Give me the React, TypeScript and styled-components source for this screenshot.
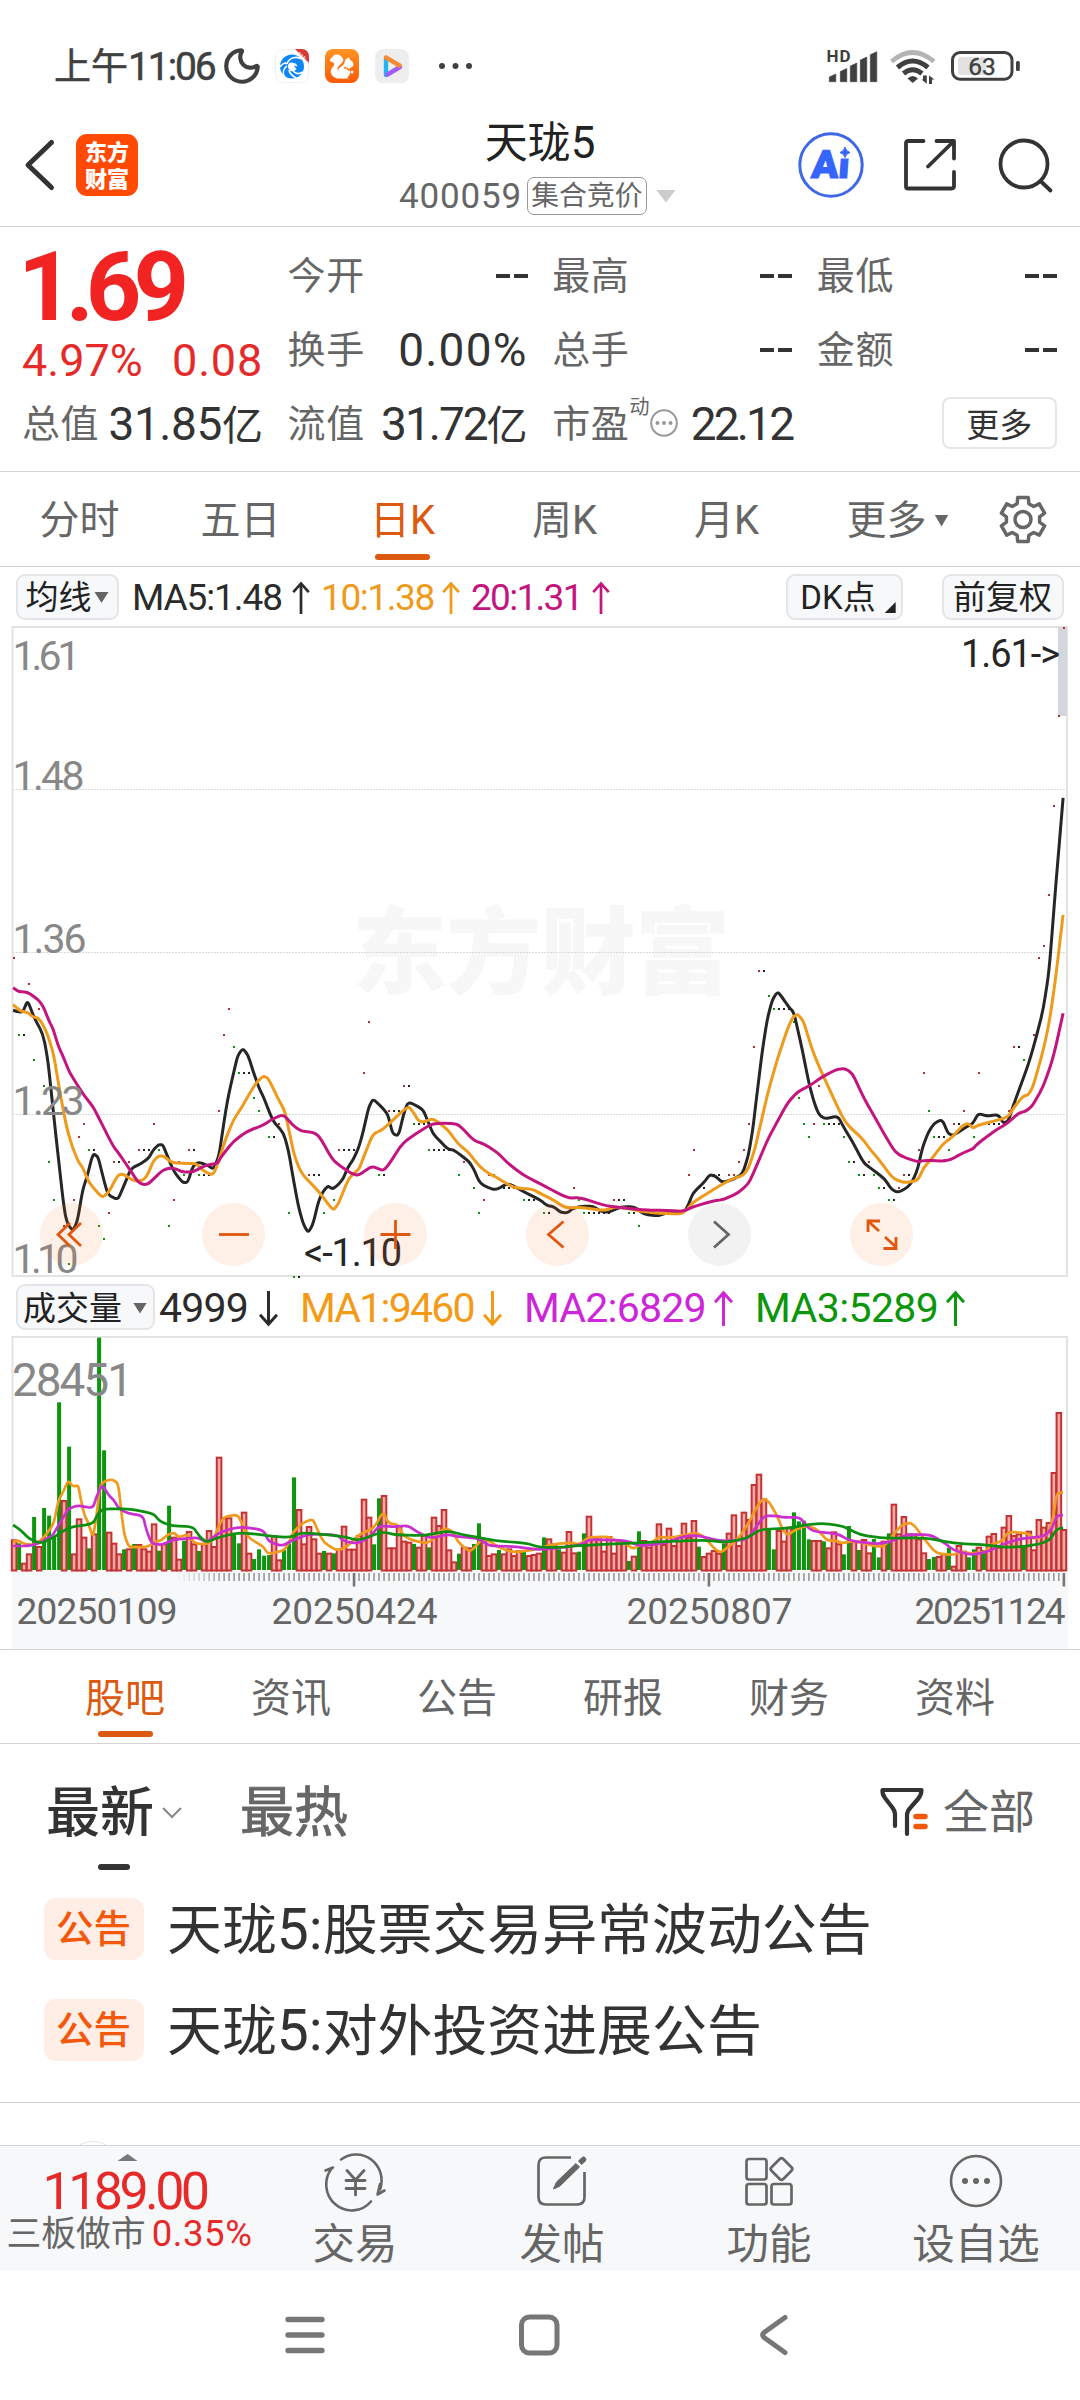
import React from "react";
import styled, { createGlobalStyle } from "styled-components";
import { Moon } from "lucide-react";

const FONT = `Roboto, "Noto Sans CJK SC", sans-serif`;
const ACCENT = "#dc5a10";
const GREY = "#666";
const INK = "#2b2b2b";
const RED = "#e62a2a";

const Global = createGlobalStyle`
  * { box-sizing: border-box; }
  body { margin: 0; background: #fff; font-family: ${FONT}; line-height: 1; color: ${INK}; }
  svg { display: block; flex: none; overflow: visible; }
  text { font-family: ${FONT}; }
`;

const Screen = styled.div`
  width: 1080px;
  height: 2400px;
  overflow: hidden;
  display: flex;
  flex-direction: column;
  background: #fff;
  white-space: nowrap;
`;

const Num = styled.span<{ $size: number; $ls?: number; $color?: string; $weight?: number }>`
  font-size: ${(p) => p.$size}px;
  letter-spacing: ${(p) => p.$ls ?? 0}px;
  color: ${(p) => p.$color ?? "inherit"};
  font-weight: ${(p) => p.$weight ?? 400};
`;

/* ---------- status bar ---------- */
const StatusBar = styled.div`
  height: 104px;
  padding: 28px 60px 0 54px;
  display: flex;
  align-items: center;
  color: #404040;
`;
const Clock = styled.div`
  font-size: 37px;
  display: flex;
  align-items: baseline;
  width: 167px;
  padding-top: 2px;
  -webkit-text-stroke: 0.5px currentColor;
`;
const AppIcons = styled.div`
  display: flex;
  align-items: center;
  gap: 16px;
  margin-left: 12px;
`;
const StatusDots = styled.div`
  margin-left: 29px;
`;
const StatusRight = styled.div`
  display: flex;
  align-items: center;
  margin-left: auto;
`;

/* ---------- header ---------- */
const Header = styled.header`
  height: 123px;
  border-bottom: 1px solid #d5d5d5;
  display: grid;
  grid-template-columns: 270px 1fr 290px;
  align-items: center;
`;
const HeaderLeft = styled.div`
  display: flex;
  align-items: center;
  padding-left: 24px;
  gap: 21px;
`;
const Logo = styled.div`
  width: 62px;
  height: 62px;
  border-radius: 11px;
  background: #ff4a05;
  color: #fff;
  font: 900 22px/27px "Noto Sans CJK SC", sans-serif;
  display: flex;
  flex-direction: column;
  align-items: center;
  justify-content: center;
  padding-bottom: 2px;
`;
const TitleBlock = styled.div`
  display: flex;
  flex-direction: column;
  align-items: center;
  padding-top: 6px;
  gap: 12px;
`;
const Title = styled.div`
  font-size: 43px;
  display: flex;
  align-items: baseline;
  padding-left: 20px;
  color: #222;
`;
const SubTitle = styled.div`
  display: flex;
  align-items: center;
  color: ${GREY};
  padding-left: 15px;
`;
const Badge = styled.span`
  width: 120px;
  height: 38px;
  margin-left: 5px;
  border: 1.5px solid #999;
  border-radius: 7px;
  font-size: 27.8px;
  display: flex;
  align-items: center;
  justify-content: center;
`;
const Caret = styled.i<{ $w: number; $h: number; $c: string; $ml?: number; $up?: boolean }>`
  width: ${(p) => p.$w}px;
  height: ${(p) => p.$h}px;
  margin-left: ${(p) => p.$ml ?? 0}px;
  background: ${(p) => p.$c};
  clip-path: ${(p) => (p.$up ? "polygon(50% 0, 100% 100%, 0 100%)" : "polygon(0 0, 100% 0, 50% 100%)")};
`;
const HeaderRight = styled.div`
  display: flex;
  align-items: center;
  gap: 40px;
  padding-left: 8px;
`;

/* ---------- quote ---------- */
const Quote = styled.section`
  height: 245px;
  padding: 11px 24px 10px 22px;
  border-bottom: 1px solid #d5d5d5;
  display: grid;
  grid-template-columns: 241px repeat(3, 240px);
  grid-template-rows: 74px 74px 74px;
  column-gap: 24.6px;
`;
const Cell = styled.div<{ $drop?: number }>`
  display: flex;
  align-items: center;
  justify-content: space-between;
  padding-top: ${(p) => p.$drop ?? 2}px;
  color: #333;
`;
const Label = styled.span`
  font-size: 38px;
  letter-spacing: 0.6px;
  color: ${GREY};
`;
const Value = styled.span<{ $ls?: number }>`
  font-size: 46px;
  letter-spacing: ${(p) => p.$ls ?? 0}px;
  display: flex;
  align-items: baseline;
`;
const Unit = styled.span`
  font-size: 41px;
  letter-spacing: 0;
`;
const Dash = styled.span`
  display: flex;
  gap: 4px;
  &::before,
  &::after {
    content: "";
    width: 14px;
    height: 3.5px;
    background: #333;
  }
`;
const Price = styled.div`
  display: flex;
  align-items: center;
  padding-top: 24px;
  margin-left: -4px;
  color: #f12323;
`;
const PeLabel = styled.span`
  display: flex;
  align-items: center;
`;
const Sup = styled.sup`
  font-size: 20px;
  align-self: flex-start;
  margin: -8px 1px 0 0;
  color: ${GREY};
`;
const MoreButton = styled.button`
  margin-left: auto;
  width: 115px;
  height: 52px;
  border: 2px solid #e6e6e6;
  border-radius: 8px;
  background: #fff;
  padding: 0 0 3px;
  font: 33px ${FONT};
  color: #333;
`;

/* ---------- tabs ---------- */
const PeriodTabs = styled.nav`
  height: 95px;
  border-bottom: 1px solid #d5d5d5;
  display: flex;
  align-items: center;
  padding-right: 24px;
`;
const PeriodTab = styled.div<{ $active?: boolean; $w: number }>`
  width: ${(p) => p.$w}px;
  height: 94px;
  display: flex;
  align-items: center;
  justify-content: center;
  padding: 3px 1px 0 0;
  font-size: 40px;
  position: relative;
  color: ${(p) => (p.$active ? ACCENT : GREY)};
  &::after {
    content: "";
    display: ${(p) => (p.$active ? "block" : "none")};
    position: absolute;
    bottom: 6px;
    left: 50%;
    margin-left: -28px;
    width: 55px;
    height: 6px;
    border-radius: 3px;
    background: ${ACCENT};
  }
`;
const TabSpacer = styled.div`
  width: 11px;
`;

const LegendBar = styled.div<{ $h: number; $gap: number }>`
  height: ${(p) => p.$h}px;
  padding: 0 16px;
  display: flex;
  align-items: center;
  gap: ${(p) => p.$gap}px;
`;
const Pill = styled.div<{ $w: number; $push?: boolean; $mr?: number }>`
  width: ${(p) => p.$w}px;
  height: 46px;
  margin-left: ${(p) => (p.$push ? "auto" : "0")};
  margin-right: ${(p) => p.$mr ?? 0}px;
  border: 2px solid #e4e5e8;
  border-radius: 9px;
  background: #f7f8fa;
  font-size: 33px;
  color: #222;
  display: flex;
  align-items: center;
  justify-content: center;
  padding: 2px 1px 0 0;
`;
const Corner = styled.i`
  width: 11px;
  height: 11px;
  margin: 20px -8px 0 9px;
  background: #222;
  clip-path: polygon(100% 0, 100% 100%, 0 100%);
`;
const LegendItem = styled.div<{ $w: number; $c: string }>`
  width: ${(p) => p.$w}px;
  color: ${(p) => p.$c};
  display: flex;
  align-items: center;
  justify-content: space-between;
  padding-top: 2px;
`;

/* ---------- chart ---------- */
const PricePanel = styled.div`
  position: relative;
  height: 652px;
`;
const Tools = styled.div`
  position: absolute;
  left: 40px;
  top: 577px;
  display: flex;
  gap: 99px;
`;
const Tool = styled.button<{ $grey?: boolean }>`
  width: 63px;
  height: 63px;
  border: 0;
  padding: 0;
  border-radius: 50%;
  background: ${(p) => (p.$grey ? "rgba(90,90,90,.08)" : "rgba(250,110,40,.11)")};
  color: ${(p) => (p.$grey ? GREY : "#e0580f")};
`;

/* ---------- info tabs ---------- */
const InfoTabs = styled.nav`
  height: 95px;
  border-top: 1px solid #d5d5d5;
  border-bottom: 1px solid #d5d5d5;
  padding: 0 42px;
  display: grid;
  grid-template-columns: repeat(6, 166px);
`;
const InfoTab = styled.div<{ $active?: boolean }>`
  display: flex;
  flex-direction: column;
  align-items: center;
  padding-top: 29px;
  font-size: 40px;
  color: ${(p) => (p.$active ? ACCENT : GREY)};
  &::after {
    content: "";
    width: 55px;
    height: 6px;
    margin-top: 12px;
    border-radius: 3px;
    background: ${(p) => (p.$active ? ACCENT : "transparent")};
  }
`;
const FeedHead = styled.div`
  height: 135px;
  padding: 43px 45px 0 46px;
  display: flex;
  align-items: flex-start;
`;
const Sort = styled.div<{ $active?: boolean; $ml?: number }>`
  font-size: 54px;
  font-weight: ${(p) => (p.$active ? 500 : 400)};
  color: ${(p) => (p.$active ? "#333" : GREY)};
  margin-left: ${(p) => p.$ml ?? 0}px;
  -webkit-text-stroke: ${(p) => (p.$active ? 0 : 0.8)}px currentColor;
  &::after {
    content: "";
    display: block;
    width: 32px;
    height: 6px;
    margin: 23px 0 0 52px;
    border-radius: 3px;
    background: ${(p) => (p.$active ? "#333" : "transparent")};
  }
`;
const SortChevron = styled.div`
  margin: 20px 0 0 8px;
`;
const Filter = styled.div`
  margin: 0 0 0 auto;
  display: flex;
  align-items: center;
  gap: 15px;
  font-size: 46px;
  color: ${GREY};
`;
const Feed = styled.div`
  height: 224px;
  padding: 19px 44px 0;
  border-bottom: 1px solid #cfcfcf;
  display: flex;
  flex-direction: column;
  gap: 39px;
`;
const Post = styled.article`
  height: 62px;
  display: flex;
  align-items: center;
  gap: 23px;
`;
const Tag = styled.span`
  width: 100px;
  height: 62px;
  border-radius: 12px;
  background: #feeee6;
  color: #f2590d;
  font-size: 37.5px;
  font-weight: 500;
  display: flex;
  align-items: center;
  justify-content: center;
  padding: 1px 1px 0 0;
`;
const PostTitle = styled.div`
  font-size: 54.9px;
  color: #333;
  display: flex;
  align-items: baseline;
`;
const NextPost = styled.div`
  height: 42px;
  padding: 38px 0 0 66px;
  overflow: hidden;
`;
const Avatar = styled.div`
  width: 54px;
  height: 54px;
  border-radius: 50%;
  border: 1px solid #e4e4e4;
`;

/* ---------- bottom ---------- */
const BottomBar = styled.footer`
  height: 125px;
  border-top: 1px solid #d2d4d8;
  background: #f7f8fa;
  display: grid;
  grid-template-columns: 252px repeat(4, 207px);
`;
const Index = styled.div`
  display: flex;
  flex-direction: column;
  align-items: center;
  padding: 8px 3px 0 0;
`;
const IndexValue = styled.div`
  display: flex;
  height: 50px;
  margin-top: 5px;
`;
const IndexRow = styled.div`
  display: flex;
  align-items: baseline;
  gap: 6px;
  font-size: 34.8px;
  color: ${GREY};
  padding-left: 10px;
`;
const Action = styled.div`
  display: flex;
  flex-direction: column;
  align-items: center;
  gap: 14px;
  padding: 6px 1px 0 0;
  font-size: 42.5px;
  color: ${GREY};
`;
const SystemNav = styled.div`
  flex: 1;
  display: flex;
  align-items: center;
  padding-left: 284px;
  gap: 193px;
`;

/* ---------- drawings ---------- */
const Arrow = ({ down, big }: { down?: boolean; big?: boolean }) => (
  <svg width={big ? 19 : 18} height={big ? 35 : 32} viewBox="0 0 18 33" fill="none" stroke="currentColor" strokeWidth="2.8">
    <path d={down ? "M9 0V31M1 22.5 9 31.5 17 22.5" : "M9 33V2M1 10.5 9 1.5 17 10.5"} />
  </svg>
);

const StatusIcons = () => (
  <svg width="196" height="40" viewBox="824 46 196 40">
    <text x="826.5" y="62" fontSize="17" fontWeight="700" fill="#404040" textLength="24">HD</text>
    {[[829.3, 74], [840.3, 68.5], [850.3, 63], [860.3, 57], [870.3, 51.7]].map(([x, y]) => (
      <path key={x} d={`M${x} ${y + 3}L${x + 6.5} ${y}V81.7H${x}Z`} fill="#404040" stroke="#404040" strokeWidth=".6" strokeLinejoin="round" />
    ))}
    <g fill="none" stroke="#404040" strokeWidth="5">
      <path d="M891.5 61.5Q912.5 43.5 934 61.5" stroke="#b4b4b4" strokeWidth="4.6" />
      <path d="M897.5 67.5Q912.5 54.5 928 67.5" />
      <path d="M903.5 73.5Q912.5 66 922 73.5" />
    </g>
    <path d="M907.5 78.5Q912.5 73.5 918 78.5L912.7 83Z" fill="#404040" />
    <path d="M923 75.5h3.8V83.8L921.5 79.5H923ZM929 84V75.5L934.5 79.5H932V84Z" fill="#404040" />
    <rect x="952.5" y="52.5" width="59.5" height="26.7" rx="7.5" fill="none" stroke="#404040" strokeWidth="3" />
    <rect x="958" y="57" width="28" height="18" rx="3" fill="#e2e2e2" />
    <rect x="1016" y="61" width="3.8" height="10" rx="1.5" fill="#404040" />
    <text x="982" y="75" fontSize="24.5" textAnchor="middle" fill="#404040" stroke="#404040" strokeWidth=".4">63</text>
  </svg>
);

const BrowserIcon = () => (
  <svg width="34" height="34" viewBox="0 0 34 34">
    <rect x=".5" y=".5" width="33" height="33" rx="7" fill="#fff" stroke="#f1f1f1" />
    <circle cx="17" cy="17.5" r="12" fill="#0f86f7" />
    <path d="M17 12.5C20 10 24 11 26 14L28 17C28 22 26 24 24 25C26 21 24 16 20 16Z" fill="#0f86f7" />
    <g fill="none" stroke="#fff" strokeWidth="1.6">
      <path d="M12 15C14 8 22 7 27 10M12 15C10 13 7 15 5 18M12 17C7 21 8 26 10 29M14 21C15 26 19 28 22 29.5M18 22C21 25 25 25 28 23" />
    </g>
    <path d="M13 17Q13 13.5 17 13.5Q22 14 22.5 17.5L19 16.5L21.5 20.5Q19 23 16 22Q13 20.5 13 17Z" fill="#fff" />
    <path d="M20 0h7a7 7 0 0 1 7 7v7Z" fill="#d93a36" />
    <path d="M24 3.5l7 6" stroke="#f4b7b5" strokeWidth="2" strokeDasharray="2 1" />
  </svg>
);

const SquirrelIcon = () => (
  <svg width="34" height="34" viewBox="0 0 34 34">
    <defs>
      <linearGradient id="uc" x1="0" y1="0" x2="0" y2="1">
        <stop offset="0" stopColor="#ff9424" />
        <stop offset="1" stopColor="#fb5a07" />
      </linearGradient>
    </defs>
    <rect width="34" height="34" rx="8" fill="url(#uc)" />
    <path d="M5 12C5 9 7 9 8 7C11 4 17 6 18 10C19 14 14 15 13 19C12 23 14 27 18 28L19 29.5H12C7 28 5 24 6 21C7 18 10 17 9 14Z" fill="#fff" />
    <path d="M20 11L24 8L25 11C28 12 29 15 28 17C27 19 25 18 24 20C26 23 25 27 22 28.5L24 29.5H17C12 26 12 21 15 18.5C18 16.5 20 15 20 11Z" fill="#fff" />
    <path d="M13 20C13 18 16 16 18 14.5M19 19C21 18 24 20 24 22" stroke="#fb7a15" strokeWidth="1.4" fill="none" />
    <circle cx="27" cy="23" r="1.5" fill="#fff" />
  </svg>
);

const VideoIcon = () => (
  <svg width="34" height="34" viewBox="0 0 34 34">
    <rect width="34" height="34" rx="8" fill="#eee" />
    <g strokeWidth="4.4" strokeLinecap="round">
      <path d="M11 9V26" stroke="#25b4f5" />
      <path d="M12.5 25.5L25 18" stroke="#a35cf6" />
      <path d="M11 8.5L24.5 16.5" stroke="#f58b34" />
    </g>
  </svg>
);

const BackIcon = () => (
  <svg width="31" height="54" viewBox="0 0 31 54" fill="none" stroke="#333" strokeWidth="5" strokeLinecap="round" strokeLinejoin="round">
    <path d="M27.5 4.5 4 27 27.5 49.5" />
  </svg>
);

const AiIcon = () => (
  <svg width="66" height="66" viewBox="0 0 66 66">
    <circle cx="33" cy="33" r="31.2" fill="none" stroke="#3f68e6" strokeWidth="3" />
    <text x="12" y="46" fontSize="39" fontWeight="900" fill="#3565fb" stroke="#3565fb" strokeWidth="1.2" textLength="38" lengthAdjust="spacingAndGlyphs" transform="translate(4 0) skewX(-4)">Ai</text>
    <rect x="40" y="14" width="16" height="12.5" fill="#fff" />
    <path d="M47 15Q48 19.5 52 20.5Q48 21.5 47 25.5Q46 21.5 42 20.5Q46 19.5 47 15Z" fill="#3565fb" stroke="#3565fb" />
  </svg>
);

const ShareIcon = () => (
  <svg width="54" height="54" viewBox="1 0 54 54" fill="none" stroke="#333" strokeWidth="3.8" strokeLinecap="round" strokeLinejoin="round">
    <path d="M20.5 3H5Q3 3 3 5V48.5Q3 50.5 5 50.5H48.5Q51 50.5 51 48V34M33.5 3H51V20.5M51 3 25 28.5" />
  </svg>
);

const SearchIcon = () => (
  <svg width="55" height="55" viewBox="0 0 55 55" fill="none" stroke="#333" strokeWidth="3.8" strokeLinecap="round">
    <circle cx="26" cy="26" r="23.5" />
    <path d="M43 43.5 52.5 52.5" />
  </svg>
);

const gearPath = (() => {
  const pts: string[] = [];
  for (let k = 0; k < 6; k++) {
    const a = -Math.PI / 2 + (k * Math.PI) / 3;
    const steps: [number, number][] = [[16.8, -0.36], [22.5, -0.24], [22.5, 0.24], [16.8, 0.36]];
    steps.forEach(([r, d]) => pts.push(`${(24 + r * Math.cos(a + d)).toFixed(1)} ${(24.5 + r * Math.sin(a + d)).toFixed(1)}`));
  }
  return `M${pts.join("L")}Z`;
})();
const GearIcon = () => (
  <svg width="48" height="49" viewBox="0 0 48 49" fill="none" stroke={GREY} strokeWidth="3.5" strokeLinejoin="round">
    <path d={gearPath} />
    <circle cx="24" cy="24.5" r="8" />
  </svg>
);

const DotsCircle = () => (
  <svg width="28" height="28" viewBox="0 0 28 28">
    <circle cx="14" cy="13" r="12.8" fill="none" stroke="#999" strokeWidth="2" />
    {[7.5, 14, 20.5].map((x) => <circle key={x} cx={x} cy="13" r="2" fill="#999" />)}
  </svg>
);

const FilterIcon = () => (
  <svg width="48" height="50" viewBox="0 0 48 50" fill="none" stroke="#333" strokeWidth="4.2" strokeLinecap="round" strokeLinejoin="round">
    <path d="M15 39V27Q15 24 12 20L5 11Q2 7 2.5 3H41.5Q41.5 8 38 12L31 20Q27 24 27 28V47" />
    <path d="M36 29.5h9M36 39.5h9" stroke="#f2590d" strokeWidth="5.5" />
  </svg>
);

const TradeIcon = () => (
  <svg width="62" height="58" viewBox="0 0 62 58" fill="none" stroke={GREY} strokeWidth="2.6" strokeLinecap="round" strokeLinejoin="round">
    <path d="M17 7.5A25.5 26 0 0 1 56 37.5M56 32 53.5 42.5 60.5 38.5M47 49.5A25.5 26 0 0 1 8 16M1.5 18.5 9 15.5" />
    <path d="M23 18.5 31.5 28 40 18.5M31.5 28V43M22 28.5H41M22 36.5H41" strokeWidth="2.8" />
  </svg>
);
const PostIcon = () => (
  <svg width="56" height="58" viewBox="0 0 56 58" fill="none" stroke={GREY} strokeWidth="2.7">
    <path d="M37 5.5H12Q4.5 5.5 4.5 13V45Q4.5 52.5 12 52.5H43Q50.5 52.5 50.5 45V20" />
    <path d="M19.5 37 22.5 30 42 11.5 45.5 15 26 34ZM44.5 9 48 5.5Q50 4 51.5 6 52.5 8 51 9.5L47.5 12.5Z" fill={GREY} strokeWidth="1" />
  </svg>
);
const FunctionsIcon = () => (
  <svg width="50" height="58" viewBox="0 0 50 58" fill="none" stroke={GREY} strokeWidth="2.7">
    <rect x="2.5" y="7" width="20" height="20.5" rx="2.5" />
    <rect x="2.5" y="32" width="20" height="20.5" rx="2.5" />
    <rect x="27.5" y="32" width="20" height="20.5" rx="2.5" />
    <rect x="-8.3" y="-8.3" width="16.6" height="16.6" rx="2.5" transform="translate(37.5 17) rotate(45)" />
  </svg>
);
const WatchIcon = () => (
  <svg width="56" height="58" viewBox="0 0 56 58">
    <circle cx="28" cy="29" r="25" fill="none" stroke={GREY} strokeWidth="2.6" />
    {[17, 28, 39].map((x) => <circle key={x} cx={x} cy="29" r="3" fill={GREY} />)}
  </svg>
);

/* ---------- chart data: 2.904 units per px across ---------- */
const UX = 3136 / 1080;
const MA5 = "38,900 55,904 67,903 80,877 98,915 125,955 139,1015 153,1120 168,1230 182,1330 190,1375 198,1395 212,1408 225,1385 240,1315 252,1285 270,1230 285,1238 298,1280 313,1325 342,1337 357,1310 380,1265 413,1252 432,1240 445,1222 460,1210 473,1210 488,1240 505,1272 530,1297 545,1297 560,1260 576,1250 604,1258 620,1266 636,1235 648,1170 660,1110 675,1055 690,1005 705,988 720,1003 735,1040 750,1075 765,1100 792,1155 823,1182 838,1225 852,1290 866,1350 880,1392 895,1413 909,1393 925,1340 938,1318 952,1305 966,1312 982,1302 997,1288 1010,1262 1025,1245 1040,1220 1054,1182 1070,1125 1083,1104 1112,1126 1127,1142 1140,1185 1157,1189 1172,1140 1185,1110 1228,1128 1242,1155 1257,1184 1272,1197 1300,1220 1318,1222 1360,1247 1375,1265 1390,1293 1405,1305 1440,1315 1475,1298 1520,1318 1568,1337 1588,1350 1608,1353 1628,1366 1648,1367 1663,1357 1688,1352 1723,1352 1743,1363 1768,1366 1803,1353 1843,1353 1868,1370 1908,1374 1943,1366 1988,1364 1998,1350 2013,1320 2043,1298 2061,1279 2078,1283 2098,1297 2128,1290 2156,1277 2173,1235 2186,1175 2200,1080 2214,990 2228,920 2243,875 2258,857 2273,872 2290,892 2305,905 2318,950 2332,1000 2348,1065 2363,1110 2376,1138 2393,1150 2433,1144 2450,1170 2478,1207 2508,1252 2535,1268 2568,1288 2590,1314 2608,1320 2636,1308 2651,1292 2665,1265 2678,1218 2695,1182 2713,1160 2736,1152 2753,1184 2768,1189 2808,1168 2826,1160 2840,1138 2868,1144 2898,1140 2913,1160 2928,1155 2942,1120 2963,1075 2988,1020 3008,965 3030,895 3046,810 3058,690 3071,560 3087,410";
const MA10 = "38,887 60,902 80,905 95,915 112,918 126,935 140,960 155,1000 168,1060 180,1115 195,1175 210,1215 228,1250 240,1262 258,1297 285,1322 298,1331 315,1320 342,1280 357,1277 390,1294 416,1292 430,1277 445,1248 460,1236 475,1236 500,1252 545,1253 570,1253 590,1270 619,1281 636,1245 655,1197 678,1152 705,1120 722,1095 745,1066 765,1051 780,1058 808,1105 826,1130 840,1180 853,1230 868,1263 882,1282 925,1317 967,1362 982,1347 1010,1292 1025,1277 1043,1266 1060,1230 1083,1185 1112,1175 1185,1120 1200,1135 1215,1155 1230,1158 1257,1149 1300,1175 1330,1208 1360,1227 1390,1258 1420,1277 1440,1284 1475,1302 1500,1310 1545,1312 1568,1322 1608,1338 1643,1356 1688,1354 1753,1362 1783,1354 1808,1355 1868,1364 1913,1368 1978,1370 1998,1357 2013,1342 2043,1328 2088,1305 2128,1288 2158,1281 2173,1265 2190,1225 2208,1165 2228,1095 2258,1010 2288,940 2303,915 2316,909 2333,925 2358,990 2378,1030 2448,1150 2468,1170 2503,1195 2528,1222 2548,1240 2593,1288 2628,1298 2665,1292 2683,1262 2708,1240 2736,1210 2768,1190 2793,1167 2811,1160 2825,1172 2840,1165 2873,1158 2926,1147 2948,1120 2971,1098 2986,1095 3000,1075 3030,990 3046,930 3063,840 3087,680";
const MA20 = "38,848 55,857 80,858 110,875 125,890 140,920 155,945 168,980 185,1010 200,1040 215,1060 240,1092 270,1122 285,1145 328,1213 345,1230 375,1265 400,1295 416,1302 432,1300 470,1270 490,1264 510,1265 530,1273 560,1273 600,1256 630,1254 645,1235 678,1202 720,1178 765,1165 792,1150 823,1140 850,1165 875,1179 910,1181 928,1192 966,1245 995,1263 1020,1276 1040,1281 1080,1259 1112,1270 1127,1258 1170,1205 1230,1173 1257,1161 1300,1160 1332,1163 1375,1200 1405,1208 1445,1228 1475,1253 1520,1280 1568,1300 1648,1333 1686,1332 1758,1351 1868,1361 1938,1361 1983,1364 2013,1353 2068,1340 2103,1336 2143,1321 2173,1300 2188,1275 2228,1200 2258,1155 2288,1112 2318,1087 2353,1073 2388,1053 2428,1037 2448,1034 2463,1038 2478,1050 2508,1102 2553,1165 2593,1220 2613,1235 2665,1250 2683,1246 2753,1248 2798,1228 2825,1220 2838,1208 2888,1178 2926,1160 2958,1137 2978,1133 2998,1120 3030,1075 3058,1010 3087,907";

const DOTS: [string, string][] = [
  ["#b03030", "41,780 84,839 113,898 229,1191 244,1162 331,1250 375,1250 404,1221 447,1162 549,1221 520,1250 317,1368 215,1338 505,1338 636,1133 650,956 665,898 810,1162 897,1280 984,1221 1057,1045 1071,927 1130,1133 1173,1074 1347,1250 1405,1338 1420,1280 186,1397 1667,1309 1783,1338 2001,1280 2015,1221 2117,1280 2131,1280 2146,1250 2160,1221 2175,1162 2189,985 2204,809 2378,1074 2364,1162 2523,1250 2625,1280 2610,1309 2669,1221 2683,1045 2770,1162 2799,1133 2843,1045 2930,1133 2944,985 3003,956 3017,780 3031,751 3046,633 3061,428 3075,222 3089,18"],
  ["#0d960d", "55,956 99,1015 128,1074 142,1250 157,1338 259,1221 288,1397 302,1427 171,1485 200,1485 462,1221 491,1397 578,1280 534,1280 679,985 694,1045 738,1103 752,1133 781,1191 839,1368 941,1368 970,1338 1101,1280 1202,1162 1246,1221 1333,1280 1376,1309 1391,1368 1522,1338 853,1514 1434,1280 1580,1368 1681,1338 1696,1368 1827,1368 1856,1397 2233,868 2247,898 2306,927 2320,1103 2335,1162 2349,1191 2393,1162 2451,1191 2465,1250 2494,1280 2538,1280 2552,1309 2581,1338 2698,1133 2712,1191 2756,1221 2828,1191 2973,1015 1623,1397"],
  ["#222", "70,956 273,1221 346,1250 418,1221 433,1221 563,1221 592,1280 607,1280 709,1045 723,1045 796,1191 868,1514 912,1280 926,1280 999,1221 1013,1221 1028,1221 1115,1280 1144,1133 1159,1133 1188,1074 1217,1162 1231,1162 1260,1221 1275,1221 1289,1221 1304,1221 1318,1221 1449,1309 1463,1309 1478,1309 1492,1309 1507,1309 1536,1338 1551,1338 1594,1368 1710,1368 1724,1368 1739,1368 1753,1368 1768,1368 1797,1338 1811,1338 1841,1368 1870,1368 1885,1368 1899,1368 1914,1368 2044,1309 2073,1280 2088,1280 2218,809 2262,898 2276,898 2291,898 2407,1162 2422,1162 2436,1162 2480,1250 2509,1280 2567,1309 2596,1338 2639,1280 2727,1191 2741,1191 2785,1162 2872,1162 2887,1162 2901,1162 2916,1162 2959,985"],
];

/* volume bars: colour letter followed by the top of the bar, base at 900 */
const BARS = "r808 g820 r878 r850 g741 r828 g714 g737 g800 g397 r690 g530 r850 r745 r800 g835 r790 g203 g541 r785 r818 r850 g838 r835 g822 r822 r835 r842 r760 g842 r820 g707 r800 r866 g812 r783 r820 g843 r820 r780 r828 r560 r742 r742 g790 g820 r725 r848 g867 g838 g857 g855 r795 r868 g840 g820 g622 r717 r820 r768 r805 r848 g843 r848 g850 r836 r767 r836 r836 r795 r686 r740 g823 g685 r675 r832 r832 r768 r812 r815 g822 r830 r795 g832 r740 r765 r717 r838 r874 g851 r830 r832 g822 g760 r805 r855 r850 g840 r850 r835 r855 r840 g845 r855 r852 r848 g802 r805 r820 g838 r845 r783 r847 g845 g790 r737 r805 r805 r842 r798 r848 r810 r812 g873 r857 g784 r810 r830 r820 r760 r822 r773 r825 r810 r758 r800 r750 g830 r858 r848 r840 r848 g820 r788 r733 r825 r725 r747 r642 r611 r685 g775 g838 r780 r812 r770 g727 g754 g752 g808 r810 r810 g814 r832 r784 r820 g853 g768 r812 g840 r807 r847 g807 g862 r812 g790 r701 r790 r738 r790 r790 r805 r847 g867 g861 r858 r850 g833 r887 r825 r842 g862 g838 r830 g840 r797 r789 r830 r770 r735 r795 r790 g825 r782 r838 r747 r770 r756 r606 r426 r777".split(" ");
const VMA1 = "38,815 55,812 70,822 100,825 125,805 155,765 170,690 185,662 198,632 212,650 227,645 235,690 245,735 255,755 270,803 280,740 290,650 302,634 325,628 343,640 352,720 360,790 373,830 400,832 430,830 450,815 470,810 485,795 505,788 520,802 545,793 565,820 600,822 620,810 632,775 650,740 690,734 705,765 720,800 735,812 765,830 778,852 825,842 840,815 852,785 880,758 908,747 920,775 940,818 980,843 1010,828 1040,795 1085,775 1112,725 1128,760 1155,763 1170,795 1190,808 1215,815 1240,820 1265,800 1290,773 1315,785 1330,815 1345,830 1365,845 1385,825 1400,805 1420,812 1445,830 1475,843 1500,846 1545,840 1568,835 1608,822 1658,818 1683,823 1708,802 1768,800 1783,810 1813,817 1838,837 1858,825 1893,818 1913,800 1938,803 1968,800 2018,788 2043,798 2073,835 2093,848 2118,828 2148,800 2173,760 2198,710 2216,685 2233,695 2258,740 2273,782 2288,795 2308,780 2338,768 2368,775 2388,795 2403,812 2428,812 2448,820 2478,812 2508,820 2548,830 2568,828 2593,795 2618,765 2643,758 2658,770 2678,800 2718,850 2768,855 2788,845 2818,850 2858,848 2878,822 2908,815 2928,785 2988,790 3003,808 3043,793 3058,745 3068,670 3087,667";
const VMA2 = "38,828 80,828 115,820 135,805 150,800 165,775 185,740 198,717 225,706 270,715 280,680 297,643 315,675 330,690 345,715 370,730 415,737 425,780 440,820 470,825 500,810 530,806 575,803 600,817 640,785 700,770 765,780 780,815 820,828 850,810 900,792 980,795 1000,815 1040,820 1075,800 1100,768 1140,770 1185,767 1210,785 1250,805 1300,793 1330,800 1390,805 1420,828 1500,830 1568,840 1683,826 1713,808 1818,812 1858,828 1928,820 1988,798 2028,796 2088,813 2168,810 2193,775 2218,738 2248,737 2278,742 2323,742 2348,775 2368,785 2433,792 2468,812 2548,822 2588,815 2628,795 2698,793 2738,815 2768,840 2818,855 2868,845 2918,820 2968,805 3028,800 3053,780 3068,738 3087,735";
const VMA3 = "38,765 60,780 85,807 120,820 155,803 200,772 270,762 285,730 300,717 370,716 445,730 465,755 500,768 560,770 580,800 600,817 640,800 700,787 800,800 840,802 880,787 1000,800 1040,812 1110,785 1150,795 1230,797 1300,783 1350,795 1440,812 1530,820 1568,832 1628,832 1668,828 1718,825 1818,820 1928,815 2048,810 2108,817 2168,805 2208,778 2288,775 2338,765 2388,760 2448,768 2498,795 2568,805 2688,803 2768,820 2868,825 2918,832 2968,830 3018,822 3048,810 3068,778 3087,773";

/* rounds the corners of a polyline */
const smooth = (s: string, uy: number) => {
  const p = s.split(" ").map((t) => {
    const [x, y] = t.split(",").map(Number);
    return [x / UX, y / uy];
  });
  let d = `M${p[0][0].toFixed(1)} ${p[0][1].toFixed(1)}`;
  for (let i = 1; i < p.length - 1; i++) {
    const mx = (p[i][0] * 2 + p[i + 1][0]) / 3;
    const my = (p[i][1] * 2 + p[i + 1][1]) / 3;
    const sx = (p[i][0] * 2 + p[i - 1][0]) / 3;
    const sy = (p[i][1] * 2 + p[i - 1][1]) / 3;
    d += `L${sx.toFixed(1)} ${sy.toFixed(1)}Q${p[i][0].toFixed(1)} ${p[i][1].toFixed(1)} ${mx.toFixed(1)} ${my.toFixed(1)}`;
  }
  const e = p[p.length - 1];
  return `${d}L${e[0].toFixed(1)} ${e[1].toFixed(1)}`;
};

const Watermark = styled.text`
  && {
    font-family: "Noto Sans CJK SC", sans-serif;
    font-weight: 900;
    font-size: 95px;
    fill: #f7f7f7;
  }
`;

const UY = 1568 / 680;
const PriceChart = () => (
  <svg width="1080" height="652" viewBox="0 6 1080 652">
    <Watermark x="352" y="367" textLength="378">东方财富</Watermark>
    <g stroke="#d9d9d9" strokeWidth="1" strokeDasharray="2 1">
      <path d="M13 169.5H1067M13 332.5H1067M13 494.5H1067" />
    </g>
    <path d="M12.5 7H1067V656H12.5Z" fill="none" stroke="#e3e3e3" strokeWidth="2" />
    <rect x="1058" y="7" width="9" height="89" fill="#d3d6dd" />
    {DOTS.map(([c, list]) =>
      list.split(" ").map((t) => {
        const [x, y] = t.split(",").map(Number);
        return <rect key={c + t} x={Math.round(x / UX - 1)} y={Math.round(y / UY - 1)} width="2" height="2" fill={c} />;
      })
    )}
    <g fill="none" strokeWidth="3" strokeLinejoin="round">
      <path d={smooth(MA5, UY)} stroke="#262626" />
      <path d={smooth(MA10, UY)} stroke="#ee9a1c" />
      <path d={smooth(MA20, UY)} stroke="#c4157f" />
    </g>
    <g fontSize="41" fill="#888">
      <text x="12.5" y="49.5" textLength="68">1.61</text>
      <text x="12.5" y="170" textLength="72">1.48</text>
      <text x="12.5" y="332.5" textLength="74">1.36</text>
      <text x="12.5" y="495" textLength="72">1.23</text>
      <text x="12.5" y="653" textLength="66">1.10</text>
    </g>
    <g fontSize="38" fill="#262626">
      <text x="961" y="46.5" textLength="99">1.61-&gt;</text>
      <text x="304" y="646" textLength="98">&lt;-1.10</text>
    </g>
  </svg>
);

const VolumeChart = () => (
  <svg width="1080" height="313" viewBox="0 66 1080 313">
    <defs>
      <linearGradient id="fade" gradientUnits="userSpaceOnUse" x1="175" y1="0" x2="225" y2="0">
        <stop offset="0" stopColor="#888" stopOpacity="0" />
        <stop offset="1" stopColor="#777" />
      </linearGradient>
    </defs>
    <rect x="12" y="301" width="1056" height="78" fill="#f7f8fa" />
    <path d="M12.5 301V67H1067V301" fill="none" stroke="#e3e3e3" strokeWidth="2" />
    {BARS.map((b, i) => {
      const x = (41 + 14.515 * i) / UX;
      const y = Number(b.slice(1)) / 3;
      return b[0] === "g" ? (
        <rect key={i} x={x - 2} y={y} width="4" height={300 - y} fill="#0d960d" />
      ) : (
        <rect key={i} x={x - 2.3} y={y + 1} width="4.6" height={299.5 - y} fill="#f6a9a6" stroke="#c23434" strokeWidth="2" />
      );
    })}
    <g fill="none" strokeWidth="2.7" strokeLinejoin="round">
      <path d={smooth(VMA1, 3)} stroke="#f09a1e" />
      <path d={smooth(VMA2, 3)} stroke="#cc2fd0" />
      <path d={smooth(VMA3, 3)} stroke="#0d8f12" />
    </g>
    {Array.from({ length: 178 }, (_, k) => {
      const x = (41 + 14.515 * (k + 33)) / UX;
      return <rect key={k} x={x - 0.6} y="303" width="1.2" height="8" fill="url(#fade)" />;
    })}
    {[68, 139, 210].map((i) => (
      <rect key={i} x={(41 + 14.515 * i) / UX - 1.3} y="303" width="2.6" height="13.5" fill="#777" />
    ))}
    <text x="12" y="126" fontSize="46" fill="#888" textLength="121">28451</text>
    <g fontSize="37" fill={GREY}>
      <text x="16.5" y="353.5" textLength="161">20250109</text>
      <text x="271.5" y="353.5" textLength="166">20250424</text>
      <text x="626.5" y="353.5" textLength="166">20250807</text>
      <text x="914.5" y="353.5" textLength="151">20251124</text>
    </g>
  </svg>
);

const toolIcons = [
  "M30 20 18 31.5 30 43M41 20 29 31.5 41 43",
  "M17 31.5H47",
  "M16.5 31.5H46.5M31.5 17V46",
  "M37.5 18.5 22.5 31.5 37.5 44.5",
  "M26 18.5 40.5 31.5 26 44.5",
  "M30 18H18V29M18 18 29 28M35 34 46 44M46 34V45.5H33.5",
];

export default function App() {
  return (
    <>
      <Global />
      <Screen>
        <StatusBar>
          <Clock>上午<Num $size={39} $ls={-2.1}>11:06</Num></Clock>
          <Moon size={42} strokeWidth={2.4} />
          <AppIcons>
            <BrowserIcon />
            <SquirrelIcon />
            <VideoIcon />
          </AppIcons>
          <StatusDots>
            <svg width="36" height="8" viewBox="0 0 36 8" fill="#404040">
              {[4, 17.5, 31].map((x) => <circle key={x} cx={x} cy="4" r="3" />)}
            </svg>
          </StatusDots>
          <StatusRight><StatusIcons /></StatusRight>
        </StatusBar>

        <Header>
          <HeaderLeft>
            <BackIcon />
            <Logo><span>东方</span><span>财富</span></Logo>
          </HeaderLeft>
          <TitleBlock>
            <Title>天珑<Num $size={44}>5</Num></Title>
            <SubTitle>
              <Num $size={35} $ls={0.8}>400059</Num>
              <Badge>集合竞价</Badge>
              <Caret $w={20} $h={13} $c="#ccc" $ml={9} />
            </SubTitle>
          </TitleBlock>
          <HeaderRight>
            <AiIcon />
            <ShareIcon />
            <SearchIcon />
          </HeaderRight>
        </Header>

        <Quote>
          <Price><Num $size={97} $ls={-8} $weight={700}>1.69</Num></Price>
          <Cell><Label>今开</Label><Dash /></Cell>
          <Cell><Label>最高</Label><Dash /></Cell>
          <Cell><Label>最低</Label><Dash /></Cell>
          <Cell $drop={23}>
            <Num $size={45} $color={RED}>4.97%</Num>
            <Num $size={45} $color={RED} $ls={0.8}>0.08</Num>
          </Cell>
          <Cell><Label>换手</Label><Value $ls={1.2}>0.00%</Value></Cell>
          <Cell><Label>总手</Label><Dash /></Cell>
          <Cell><Label>金额</Label><Dash /></Cell>
          <Cell><Label>总值</Label><Value $ls={-0.4}>31.85<Unit>亿</Unit></Value></Cell>
          <Cell><Label>流值</Label><Value $ls={-2}>31.72<Unit>亿</Unit></Value></Cell>
          <Cell>
            <PeLabel><Label>市盈</Label><Sup>动</Sup><DotsCircle /></PeLabel>
            <Value $ls={-2.8}>22.12</Value>
          </Cell>
          <Cell $drop={0}><MoreButton>更多</MoreButton></Cell>
        </Quote>

        <PeriodTabs>
          <PeriodTab $w={160}>分时</PeriodTab>
          <PeriodTab $w={162}>五日</PeriodTab>
          <PeriodTab $w={162} $active>日K</PeriodTab>
          <PeriodTab $w={162}>周K</PeriodTab>
          <PeriodTab $w={162}>月K</PeriodTab>
          <PeriodTab $w={180}>更多<Caret $w={14} $h={12} $c={GREY} $ml={8} /></PeriodTab>
          <TabSpacer />
          <GearIcon />
        </PeriodTabs>

        <LegendBar $h={59} $gap={11}>
          <Pill $w={103} $mr={2}>均线<Caret $w={14} $h={11} $c={GREY} $ml={3} /></Pill>
          <LegendItem $w={178} $c={INK}><Num $size={37} $ls={-1.1}>MA5:1.48</Num><Arrow /></LegendItem>
          <LegendItem $w={139} $c="#ee9a1c"><Num $size={37} $ls={-1.4}>10:1.38</Num><Arrow /></LegendItem>
          <LegendItem $w={139} $c="#c4157f"><Num $size={37} $ls={-1.7}>20:1.31</Num><Arrow /></LegendItem>
          <Pill $w={117} $push $mr={28}>DK点<Corner /></Pill>
          <Pill $w={122}>前复权</Pill>
        </LegendBar>

        <PricePanel>
          <PriceChart />
          <Tools>
            {toolIcons.map((d, i) => (
              <Tool key={d} $grey={i === 4}>
                <svg width="63" height="63" viewBox="0 0 63 63" fill="none" stroke="currentColor" strokeWidth="2.8"><path d={d} /></svg>
              </Tool>
            ))}
          </Tools>
        </PricePanel>

        <LegendBar $h={58} $gap={22}>
          <Pill $w={139} $mr={-18}>成交量<Caret $w={14} $h={11} $c={GREY} $ml={11} /></Pill>
          <LegendItem $w={119} $c={INK}><Num $size={41} $ls={-0.8}>4999</Num><Arrow down big /></LegendItem>
          <LegendItem $w={202} $c="#f39a16"><Num $size={41} $ls={-1.8}>MA1:9460</Num><Arrow down big /></LegendItem>
          <LegendItem $w={209} $c="#cc26d8"><Num $size={41} $ls={-0.8}>MA2:6829</Num><Arrow big /></LegendItem>
          <LegendItem $w={210} $c="#0b960b"><Num $size={41} $ls={-0.6}>MA3:5289</Num><Arrow big /></LegendItem>
        </LegendBar>
        <VolumeChart />

        <InfoTabs>
          {["股吧", "资讯", "公告", "研报", "财务", "资料"].map((t, i) => (
            <InfoTab key={t} $active={i === 0}>{t}</InfoTab>
          ))}
        </InfoTabs>

        <FeedHead>
          <Sort $active>最新</Sort>
          <SortChevron>
            <svg width="20" height="12" viewBox="0 0 20 12" fill="none" stroke="#888" strokeWidth="2">
              <path d="M1 1 10 10 19 1" />
            </svg>
          </SortChevron>
          <Sort $ml={58}>最热</Sort>
          <Filter><FilterIcon />全部</Filter>
        </FeedHead>

        <Feed>
          <Post><Tag>公告</Tag><PostTitle>天珑<Num $size={57}>5:</Num>股票交易异常波动公告</PostTitle></Post>
          <Post><Tag>公告</Tag><PostTitle>天珑<Num $size={57}>5:</Num>对外投资进展公告</PostTitle></Post>
        </Feed>
        <NextPost><Avatar /></NextPost>

        <BottomBar>
          <Index>
            <Caret $up $w={20} $h={7} $c="#777" $ml={6} />
            <IndexValue><Num $size={52} $ls={-3.6} $color={RED}>1189.00</Num></IndexValue>
            <IndexRow>三板做市<Num $size={36.5} $ls={0.6} $color={RED}>0.35%</Num></IndexRow>
          </Index>
          <Action><TradeIcon />交易</Action>
          <Action><PostIcon />发帖</Action>
          <Action><FunctionsIcon />功能</Action>
          <Action><WatchIcon />设自选</Action>
        </BottomBar>

        <SystemNav>
          <svg width="41" height="42" viewBox="0 0 41 42" stroke="#777" strokeWidth="5.3" strokeLinecap="round">
            <path d="M4 5.5H38M4 21H38M4 36.5H38" />
          </svg>
          <svg width="42" height="42" viewBox="0 0 42 42" fill="none" stroke="#777" strokeWidth="5">
            <rect x="3.5" y="3" width="35.5" height="36" rx="8" />
          </svg>
          <svg width="32" height="42" viewBox="-4 0 32 42" fill="none" stroke="#777" strokeWidth="5" strokeLinecap="round" strokeLinejoin="round">
            <path d="M28 3.5 7 18.5Q4.5 21 7 23.5L28 38.5" />
          </svg>
        </SystemNav>
      </Screen>
    </>
  );
}
